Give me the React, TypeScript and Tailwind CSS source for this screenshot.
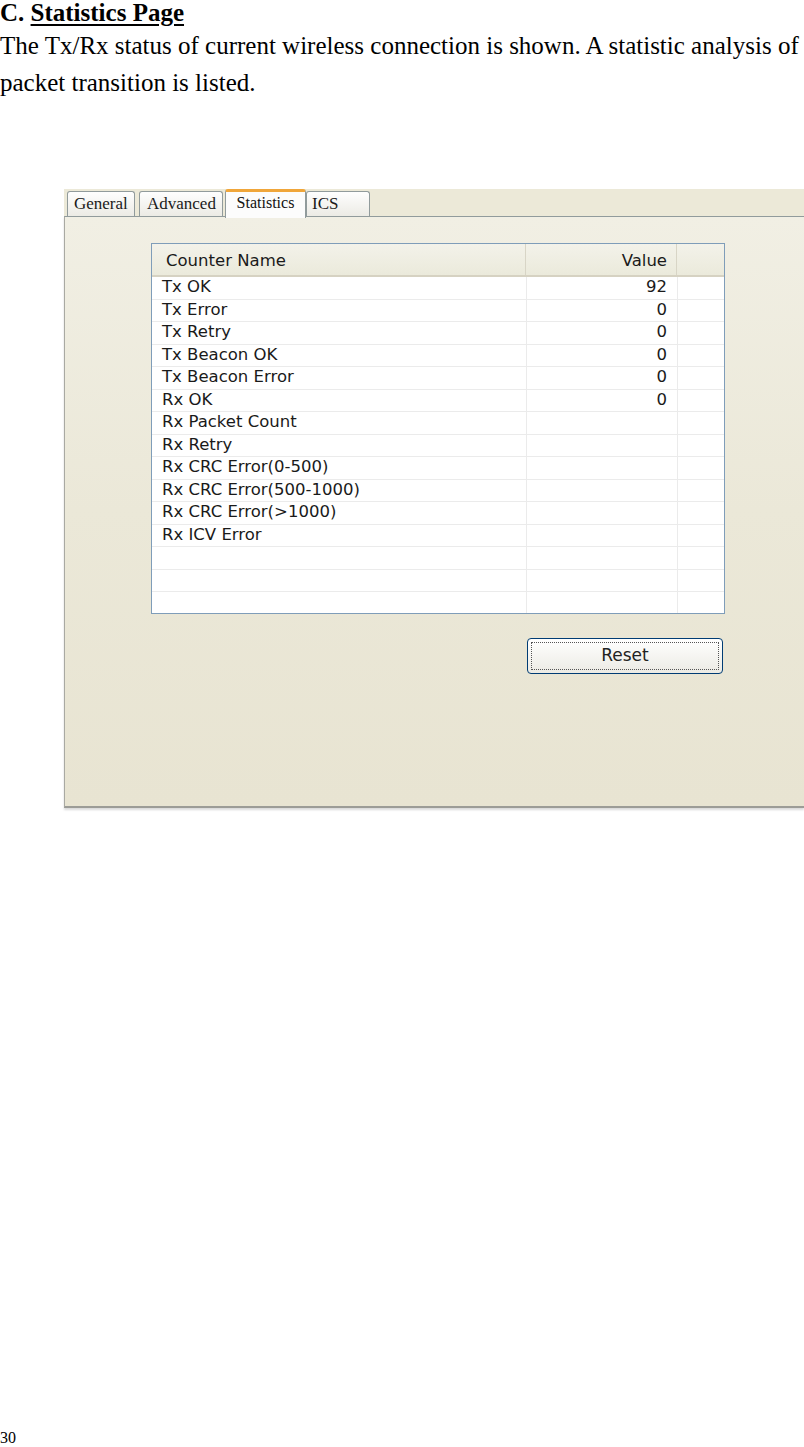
import React from 'react';

interface Counter {
  name: string;
  value: string;
}

const counters: Counter[] = [
  { name: 'Tx OK', value: '92' },
  { name: 'Tx Error', value: '0' },
  { name: 'Tx Retry', value: '0' },
  { name: 'Tx Beacon OK', value: '0' },
  { name: 'Tx Beacon Error', value: '0' },
  { name: 'Rx OK', value: '0' },
  { name: 'Rx Packet Count', value: '' },
  { name: 'Rx Retry', value: '' },
  { name: 'Rx CRC Error(0-500)', value: '' },
  { name: 'Rx CRC Error(500-1000)', value: '' },
  { name: 'Rx CRC Error(>1000)', value: '' },
  { name: 'Rx ICV Error', value: '' },
  { name: '', value: '' },
  { name: '', value: '' },
  { name: '', value: '' },
];

function StatsList() {
  return (
    <div className="w-[574px] h-[371px] border border-[#7f9db9] bg-white overflow-hidden font-['DejaVu_Sans',sans-serif] text-[16.5px] text-[#1a1a1a]">
      <div className="flex h-[33px] items-center border-b-2 border-[#d6d2c2] bg-gradient-to-b from-[#f3f2ea] to-[#ebeadb]">
        <div className="flex h-full w-[374px] items-center border-r border-[#d8d5c6] pl-[14px] pt-[4px]">Counter Name</div>
        <div className="flex h-full w-[151px] items-center justify-end border-r border-[#d8d5c6] pr-[9px] pt-[4px]">Value</div>
        <div className="flex-1" />
      </div>
      {counters.map((c, i) => (
        <div key={i} className="flex h-[22.5px] items-center border-b border-[#ebebeb]">
          <div className="flex h-full w-[375px] items-center border-r border-[#ebebeb] pl-[10px]">{c.name}</div>
          <div className="flex h-full w-[151px] items-center justify-end border-r border-[#ebebeb] pr-[10px]">{c.value}</div>
          <div className="flex-1" />
        </div>
      ))}
    </div>
  );
}

export default function App() {
  return (
    <div className="relative w-[804px] h-[1447px] overflow-hidden bg-white font-['Liberation_Serif',serif] text-black">
      <h2 className="text-[25px] font-bold leading-[25px]">
        C. <span className="underline decoration-[2px] underline-offset-[3px]">Statistics Page</span>
      </h2>
      <p className="mt-[2px] text-[25px] leading-[37px] whitespace-nowrap">
        The Tx/Rx status of current wireless connection is shown. A statistic analysis of
        <br />
        packet transition is listed.
      </p>

      {/* screenshot of the utility */}
      <div className="ml-[64px] mt-[88px] h-[619px] w-[740px] bg-[#ece9d8] flex flex-col">
        <div className="flex h-[27px] items-end pl-[3px] bg-[#ece9d8] text-[#1a1a1a]">
          <div className="flex h-[25px] w-[68px] items-center rounded-t-[3px] border-x border-t border-[#919b9c] bg-gradient-to-b from-[#fefefe] to-[#ecebe5] pl-[6px] text-[17px]">
            General
          </div>
          <div className="ml-[4px] flex h-[25px] w-[84px] items-center rounded-t-[3px] border-x border-t border-[#919b9c] bg-gradient-to-b from-[#fefefe] to-[#ecebe5] pl-[7px] text-[17px]">
            Advanced
          </div>
          <div className="relative z-10 -mb-[2px] ml-[2px] flex h-[29px] w-[81px] items-center justify-center rounded-t-[3px] border-x border-t-[3px] border-x-[#919b9c] border-t-[#f0a63a] bg-[#fcfcfc] pb-[4px] text-[16px] text-[#111]">
            Statistics
          </div>
          <div className="flex h-[25px] w-[64px] items-center rounded-t-[3px] border-x border-t border-[#919b9c] bg-gradient-to-b from-[#fefefe] to-[#ecebe5] pl-[5px] text-[17px]">
            ICS
          </div>
        </div>
        <div className="flex-1 border-t border-l border-b-2 border-t-[#919b9c] border-l-[#a9a9a2] border-b-[#9c9c97] bg-gradient-to-b from-[#f1efe4] via-[#ebe8d8] to-[#e8e4d2] pl-[86px] pt-[26px] shadow-[0_2px_2px_rgba(0,0,0,0.15)]">
          <StatsList />
          <div className="mt-[24px] flex w-[572px] justify-end">
            <button className="flex h-[36px] w-[196px] items-center justify-center rounded-[4px] border border-[#003c74] bg-gradient-to-b from-[#ffffff] to-[#ecebe4] p-[3px] font-['DejaVu_Sans',sans-serif] text-[17px] text-[#222]">
              <span className="flex h-full w-full items-center justify-center border border-dotted border-[#555]">Reset</span>
            </button>
          </div>
        </div>
      </div>

      <div className="absolute left-0 bottom-[1px] text-[16px] leading-[16px]">30</div>
    </div>
  );
}
